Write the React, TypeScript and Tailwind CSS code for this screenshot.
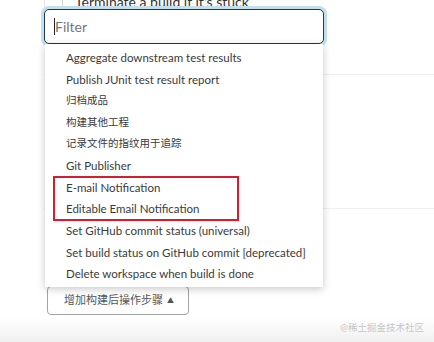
import React from "react";

const items = [
  { label: "Aggregate downstream test results" },
  { label: "Publish JUnit test result report" },
  { label: "归档成品", cjk: true },
  { label: "构建其他工程", cjk: true },
  { label: "记录文件的指纹用于追踪", cjk: true },
  { label: "Git Publisher" },
  { label: "E-mail Notification" },
  { label: "Editable Email Notification" },
  { label: "Set GitHub commit status (universal)" },
  { label: "Set build status on GitHub commit [deprecated]" },
  { label: "Delete workspace when build is done" },
];

const font = {
  fontFamily: 'Lato, "Noto Sans CJK SC", sans-serif',
};

export default function App() {
  return (
    <div
      className="relative w-[434px] h-[342px] overflow-hidden bg-white text-[#333]"
      style={font}
    >
      {/* page content behind the menu */}
      <div className="flex flex-col h-full">
        <div className="ml-[44px] h-[10px] border-l border-[#e3e3e3] flex">
          <div className="ml-[17px] border-l border-[#d6d6d6] pl-[12px] -mt-[6px] text-[14px] leading-[16px] text-[#333]">
            Terminate a build if it's stuck
          </div>
        </div>
        <div className="h-[64px]" />
        <div className="ml-[44px] border-t border-[#efefef]" />
        <div className="h-[133px]" />
        <div className="ml-[44px] border-t border-[#efefef]" />
        <div className="h-[77px]" />
        <div className="pl-[47px]">
          <button className="flex items-center gap-[4px] h-[29px] w-[142px] pl-[16px] border border-[#a3a3a3] rounded-[4px] text-[11px] text-[#555] bg-white">
            <span>增加构建后操作步骤</span>
            <span className="text-[7px] text-[#555] mt-[-1px]">▲</span>
          </button>
        </div>
        <div className="flex-1 mt-[3px] bg-gradient-to-b from-white to-[#f0f0f0] flex justify-end items-start pr-[10px] pt-[3px]">
          <span className="text-[9.5px] text-[#c6c6c6]">@稀土掘金技术社区</span>
        </div>
      </div>

      {/* filter dropdown overlay */}
      <div className="absolute left-[44px] top-[9px] w-[280px]">
        <div className="h-[35px] rounded-[5px] border border-[#1d3a4f] ring-[3px] ring-[#c3deec] bg-white flex items-center pl-[9px]">
          <span className="w-px h-[17px] bg-[#222]" />
          <span className="text-[14px] text-[#767676]">Filter</span>
        </div>
        <div className="ml-[1px] w-[278px] bg-white shadow-[0_2px_8px_rgba(0,0,0,0.22)] pt-[3px] pb-[2px]">
          {items.map((item) => (
            <div
              key={item.label}
              className={`h-[21.6px] flex items-center pl-[21px] text-[#3a3a3a] whitespace-nowrap ${
                item.cjk ? "text-[10.5px]" : "text-[11.5px]"
              }`}
            >
              {item.label}
            </div>
          ))}
        </div>
      </div>

      {/* annotation */}
      <div className="absolute left-[53px] top-[176px] w-[186px] h-[45px] border-2 border-[#d21f2f]" />
    </div>
  );
}
